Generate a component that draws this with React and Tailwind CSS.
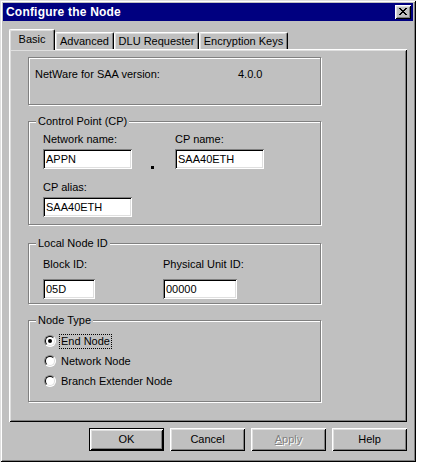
import React from 'react';

const font = { fontFamily: '"Liberation Sans", Arial, sans-serif' };

// win95 bevels
const raised =
  'shadow-[inset_1px_1px_0_#fff,inset_-1px_-1px_0_#000,inset_2px_2px_0_#dfdfdf,inset_-2px_-2px_0_#808080]';
const frame =
  'shadow-[inset_1px_1px_0_#dfdfdf,inset_-1px_-1px_0_#000,inset_2px_2px_0_#fff,inset_-2px_-2px_0_#808080]';
const sunken =
  'shadow-[inset_1px_1px_0_#808080,inset_-1px_-1px_0_#fff,inset_2px_2px_0_#000,inset_-2px_-2px_0_#dfdfdf]';

function Group({ title, className, children }) {
  return (
    <div
      className={`relative w-[293px] border border-[#808080] shadow-[inset_1px_1px_0_#fff,1px_1px_0_#fff] ${className}`}
    >
      {title && (
        <span className="absolute -top-[7px] left-[7px] px-[2px] bg-[#c0c0c0] leading-[13px]">
          {title}
        </span>
      )}
      {children}
    </div>
  );
}

function Field({ value, w }) {
  return (
    <div className={`${w} h-[20px] bg-white ${sunken} pl-[3px] flex items-center leading-[13px] text-black`}>
      {value}
    </div>
  );
}

function Radio({ label, checked }) {
  return (
    <div className="h-[20px] flex items-center">
      <div className="relative w-[12px] h-[12px] rounded-full bg-white border border-t-[#808080] border-l-[#808080] border-b-white border-r-white">
        <div className="absolute inset-0 rounded-full border border-t-black border-l-black border-b-[#dfdfdf] border-r-[#dfdfdf]" />
        {checked && <div className="absolute left-[3px] top-[3px] w-[4px] h-[4px] rounded-full bg-black" />}
      </div>
      <span
        className={`ml-[4px] px-[1px] leading-[13px] ${
          checked ? 'outline outline-1 outline-dotted outline-black' : ''
        }`}
      >
        {label}
      </span>
    </div>
  );
}

function Button({ children, isDefault, disabled }) {
  return (
    <div
      className={`w-[75px] h-[23px] flex items-center justify-center ${
        isDefault ? 'border border-black' : ''
      }`}
    >
      <div className={`w-full h-full flex items-center justify-center ${raised}`}>
        {disabled ? (
          <span className="text-[#808080] [text-shadow:1px_1px_0_#fff]">
            <span className="underline">A</span>pply
          </span>
        ) : (
          children
        )}
      </div>
    </div>
  );
}

export default function App() {
  const tabs = [
    { name: 'Advanced', w: 'w-[59px]' },
    { name: 'DLU Requester', w: 'w-[85px]' },
    { name: 'Encryption Keys', w: 'w-[89px]' },
  ];

  return (
    <div className="w-[436px] h-[474px] bg-white text-[11px] text-black" style={font}>
      <div className={`w-[416px] h-[462px] bg-[#c0c0c0] p-[3px] flex flex-col ${frame}`}>
        {/* Title bar */}
        <div className="h-[18px] bg-[#000080] flex items-center pl-[3px] pr-[2px]">
          <span className="text-white font-bold text-[12px] tracking-[0.2px]">Configure the Node</span>
          <div className={`ml-auto w-[16px] h-[14px] bg-[#c0c0c0] ${raised} flex items-center justify-center`}>
            <svg width="8" height="7" viewBox="0 0 8 7" className="-mt-px">
              <path d="M0 0h2v1h1v1h2v-1h1v-1h2v1h-1v1h-1v1h-1v1h1v1h1v1h1v1h-2v-1h-1v-1h-2v1h-1v1h-2v-1h1v-1h1v-1h1v-1h-1v-1h-1v-1h-1z" fill="#000" />
            </svg>
          </div>
        </div>

        <div className="px-[6px]">
          {/* Tabs */}
          <div className="mt-[8px] h-[20px] flex items-end relative z-10">
            <div className="w-[46px] h-[21px] -mb-px bg-[#c0c0c0] border-l border-t border-white border-r border-r-black rounded-t-[2px] shadow-[inset_-1px_0_0_#808080,inset_1px_1px_0_#dfdfdf] flex justify-center pt-[3px] leading-[13px]">
              Basic
            </div>
            {tabs.map((t) => (
              <div
                key={t.name}
                className={`${t.w} h-[17px] border-l border-t border-white border-r border-r-black rounded-t-[2px] shadow-[inset_-1px_0_0_#808080,inset_1px_1px_0_#dfdfdf] flex justify-center pt-[2px] leading-[13px]`}
              >
                {t.name}
              </div>
            ))}
          </div>

          {/* Panel */}
          <div className={`w-[398px] h-[373px] ${raised} pl-[19px] pt-[8px]`}>
            <Group className="h-[48px] pl-[6px] pt-[10px]">
              <div className="flex leading-[13px]">
                <span className="w-[203px]">NetWare for SAA version:</span>
                <span>4.0.0</span>
              </div>
            </Group>

            <Group title="Control Point (CP)" className="mt-[16px] h-[104px] pl-[14px] pt-[11px]">
              <div className="flex">
                <div className="w-[89px]">
                  <div className="leading-[13px]">Network name:</div>
                  <div className="mt-[3px]">
                    <Field value="APPN" w="w-[89px]" />
                  </div>
                </div>
                <div className="w-[43px] flex justify-center pt-[33px] pr-[2px]">
                  <div className="w-[3px] h-[3px] bg-black" />
                </div>
                <div>
                  <div className="leading-[13px]">CP name:</div>
                  <div className="mt-[3px]">
                    <Field value="SAA40ETH" w="w-[89px]" />
                  </div>
                </div>
              </div>
              <div className="mt-[12px] leading-[13px]">CP alias:</div>
              <div className="mt-[3px]">
                <Field value="SAA40ETH" w="w-[89px]" />
              </div>
            </Group>

            <Group title="Local Node ID" className="mt-[18px] h-[61px] pl-[14px] pt-[14px]">
              <div className="flex">
                <div className="w-[120px]">
                  <div className="leading-[13px]">Block ID:</div>
                  <div className="mt-[8px]">
                    <Field value="05D" w="w-[52px]" />
                  </div>
                </div>
                <div>
                  <div className="leading-[13px]">Physical Unit ID:</div>
                  <div className="mt-[8px]">
                    <Field value="00000" w="w-[74px]" />
                  </div>
                </div>
              </div>
            </Group>

            <Group title="Node Type" className="mt-[16px] h-[82px] pl-[15px] pt-[10px]">
              <Radio label="End Node" checked />
              <Radio label="Network Node" />
              <Radio label="Branch Extender Node" />
            </Group>
          </div>

          {/* Buttons */}
          <div className="mt-[6px] w-[398px] flex justify-end gap-[6px]">
            <Button isDefault>OK</Button>
            <Button>Cancel</Button>
            <Button disabled />
            <Button>Help</Button>
          </div>
        </div>
      </div>
    </div>
  );
}
